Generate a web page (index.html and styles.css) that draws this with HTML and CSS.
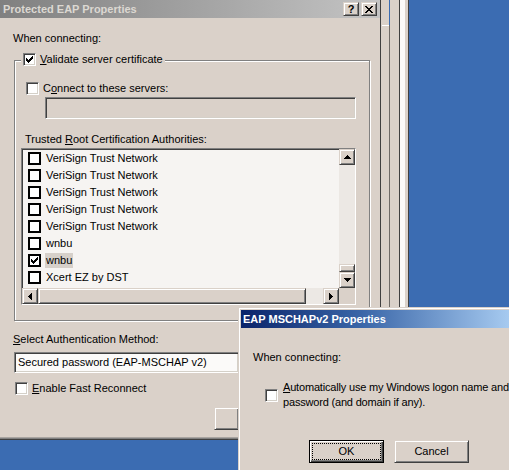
FILE: index.html
```html
<!DOCTYPE html>
<html>
<head>
<meta charset="utf-8">
<title>Protected EAP Properties</title>
<link rel="stylesheet" href="styles.css">
</head>
<body>
<div class="desktop">
  <div class="bgwin">
    <div class="sc sc-a"><div class="sc-a-top"></div></div>
    <div class="sl sl-g"></div>
    <div class="sc sc-b"></div>
    <div class="sl"></div>
    <div class="sw"></div>
    <div class="sc sc-c"></div>
    <div class="sl"></div>
  </div>

  <div class="win main">
    <div class="titlebar inactive">
      <span class="title">Protected EAP Properties</span>
      <span class="tbtns">
        <span class="tbtn raised">?</span>
        <span class="tbtn raised"><svg width="8" height="7" viewBox="0 0 8 7"><path d="M0 0h2v1H0z M6 0h2v1H6z M1 1h2v1H1z M5 1h2v1H5z M2 2h4v1H2z M3 3h2v1H3z M2 4h4v1H2z M1 5h2v1H1z M5 5h2v1H5z M0 6h2v1H0z M6 6h2v1H6z" fill="#000"/></svg></span>
      </span>
    </div>
    <div class="main-body">
      <div class="label when">When connecting:</div>
      <div class="group">
        <div class="legend">
          <span class="cb"><svg class="chk" width="7" height="7" viewBox="0 0 7 7"><path d="M0 2h1v3H0z M1 3h1v3H1z M2 4h1v3H2z M3 3h1v3H3z M4 2h1v3H4z M5 1h1v3H5z M6 0h1v3H6z" fill="#000"/></svg></span>
          <span><u>V</u>alidate server certificate</span>
        </div>
        <div class="row connect"><span class="cb"></span><span>C<u>o</u>nnect to these servers:</span></div>
        <div class="textbox sunken"></div>
        <div class="label trusted">Trusted <u>R</u>oot Certification Authorities:</div>
        <div class="listbox sunken">
          <div class="items">
            <div class="item"><span class="lcb"></span><span>VeriSign Trust Network</span></div>
            <div class="item"><span class="lcb"></span><span>VeriSign Trust Network</span></div>
            <div class="item"><span class="lcb"></span><span>VeriSign Trust Network</span></div>
            <div class="item"><span class="lcb"></span><span>VeriSign Trust Network</span></div>
            <div class="item"><span class="lcb"></span><span>VeriSign Trust Network</span></div>
            <div class="item"><span class="lcb"></span><span>wnbu</span></div>
            <div class="item"><span class="lcb"><svg class="chk" width="7" height="7" viewBox="0 0 7 7"><path d="M0 2h1v3H0z M1 3h1v3H1z M2 4h1v3H2z M3 3h1v3H3z M4 2h1v3H4z M5 1h1v3H5z M6 0h1v3H6z" fill="#000"/></svg></span><span class="sel">wnbu</span></div>
            <div class="item"><span class="lcb"></span><span>Xcert EZ by DST</span></div>
          </div>
          <div class="vscroll">
            <span class="sbtn raised"><svg width="7" height="4" viewBox="0 0 7 4"><path d="M3 0h1v1H3z M2 1h3v1H2z M1 2h5v1H1z M0 3h7v1H0z" fill="#000"/></svg></span>
            <span class="vtrack"><span class="vthumb raised"></span></span>
            <span class="sbtn raised"><svg width="7" height="4" viewBox="0 0 7 4"><path d="M0 0h7v1H0z M1 1h5v1H1z M2 2h3v1H2z M3 3h1v1H3z" fill="#000"/></svg></span>
          </div>
          <div class="hscroll">
            <span class="sbtn raised"><svg width="4" height="7" viewBox="0 0 4 7"><path d="M0 3h1v1H0z M1 2h1v3H1z M2 1h1v5H2z M3 0h1v7H3z" fill="#000"/></svg></span>
            <span class="hthumb raised"></span>
            <span class="htrack"></span>
            <span class="sbtn raised"><svg width="4" height="7" viewBox="0 0 4 7"><path d="M0 0h1v7H0z M1 1h1v5H1z M2 2h1v3H2z M3 3h1v1H3z" fill="#000"/></svg></span>
          </div>
          <div class="corner"></div>
        </div>
      </div>
      <div class="label select"><u>S</u>elect Authentication Method:</div>
      <div class="combo sunken">Secured password (EAP-MSCHAP v2)</div>
      <div class="row fast"><span class="cb"></span><span><u>E</u>nable Fast Reconnect</span></div>
      <div class="mainbtn raised"></div>
    </div>
  </div>

  <div class="win mschap">
    <div class="titlebar active">
      <span class="title">EAP MSCHAPv2 Properties</span>
    </div>
    <div class="ms-body">
      <div class="label">When connecting:</div>
      <div class="ms-row">
        <span class="cb"></span>
        <span class="ms-text"><u>A</u>utomatically use my Windows logon name and<br>password (and domain if any).</span>
      </div>
      <div class="ms-btns">
        <span class="btn default"><span class="focus">OK</span></span>
        <span class="btn raised">Cancel</span>
      </div>
    </div>
  </div>
</div>
</body>
</html>
```

FILE: styles.css
```css
* { box-sizing: border-box; }
html, body { margin: 0; padding: 0; }
body {
  width: 509px;
  height: 470px;
  overflow: hidden;
  background: #3b6cb2;
  font-family: "Liberation Sans", Arial, sans-serif;
  font-size: 11px;
  line-height: 13px;
  color: #000;
}
u { text-decoration: underline; text-underline-offset: 1px; }

.desktop { position: relative; width: 509px; height: 470px; overflow: hidden; }

/* background window edge strip */
.bgwin {
  position: absolute;
  left: 381px;
  top: 0;
  width: 28px;
  height: 470px;
  display: flex;
}
.sc { background: #dad1c9; height: 100%; }
.sc-a { width: 8px; padding-top: 25px; }
.sc-a-top { height: 1px; background: #fff; margin-left: 1px; }
.sc-b { width: 9px; }
.sc-c { width: 3px; }
.sl { width: 1px; height: 100%; background: #404040; }
.sl-g { margin-top: 25px; height: auto; background: #6e6a66; box-shadow: 1px 0 0 #fff; }
.sw { width: 5px; background: #fbfaf8; }

/* windows */
.win { position: absolute; background: #dad1c9; }
.main {
  left: 0;
  top: 0;
  width: 381px;
  height: 440px;
  border-right: 1px solid #404040;
  border-bottom: 1px solid #404040;
  box-shadow: inset 0 -1px 0 #808080, inset 0 -2px 0 #a8a4a0;
}

.titlebar {
  height: 18px;
  display: flex;
  align-items: center;
  justify-content: space-between;
  padding: 0 3px 0 3px;
  white-space: nowrap;
}
.titlebar.inactive {
  background: linear-gradient(to right, #808080 0%, #a8a8a8 60%, #c4c4c4 100%);
  color: #dcd8d2;
}
.titlebar.active {
  background: linear-gradient(to right, #0a246a 0%, #3a66a8 45%, #a6caf0 100%);
  color: #fff;
  padding-left: 2px;
}
.title { font-weight: bold; }
.tbtns { display: flex; gap: 2px; }
.tbtn {
  width: 16px;
  height: 14px;
  display: flex;
  align-items: center;
  justify-content: center;
  font-weight: bold;
  font-size: 11px;
  line-height: 11px;
  color: #000;
}

.raised {
  background: #dad1c9;
  border: 1px solid;
  border-color: #dad1c9 #404040 #404040 #dad1c9;
  box-shadow: inset 1px 1px 0 #fff, inset -1px -1px 0 #808080;
}
.sunken {
  border: 1px solid;
  border-color: #808080 #fff #fff #808080;
  box-shadow: inset 1px 1px 0 #404040, inset -1px -1px 0 #d4d0c8;
}

.main-body { padding: 14px 0 0 13px; }
.label { height: 13px; white-space: nowrap; }

.group {
  position: relative;
  margin: 15px 0 0 1px;
  width: 356px;
  height: 261px;
  border: 1px solid #808080;
  box-shadow: inset 1px 1px 0 #fff, 1px 1px 0 #fff;
}
.legend {
  position: absolute;
  top: -8px;
  left: 6px;
  padding: 0 2px;
  display: flex;
  align-items: center;
  gap: 4px;
  background: #dad1c9;
  height: 13px;
  white-space: nowrap;
}

.cb {
  width: 13px;
  height: 13px;
  flex: none;
  background: #fff;
  border: 1px solid;
  border-color: #808080 #fff #fff #808080;
  box-shadow: inset 1px 1px 0 #404040, inset -1px -1px 0 #d4d0c8;
  padding: 2px;
  display: block;
}
.chk { display: block; }

.row { display: flex; align-items: center; gap: 4px; height: 13px; white-space: nowrap; }
.connect { margin: 21px 0 0 11px; }
.textbox { margin: 2px 0 0 30px; width: 311px; height: 22px; background: #dad1c9; }
.trusted { margin: 14px 0 0 10px; }

.listbox {
  margin: 2px 0 0 6px;
  width: 335px;
  height: 157px;
  background: #f6f4f2;
  display: grid;
  grid-template-columns: 1fr 16px;
  grid-template-rows: 1fr 16px;
}
.items { padding-top: 1px; overflow: hidden; }
.item {
  height: 17px;
  display: flex;
  align-items: center;
  gap: 5px;
  padding-left: 6px;
  white-space: nowrap;
}
.lcb {
  width: 13px;
  height: 13px;
  flex: none;
  border: 2px solid #000;
  background: #fff;
  padding: 1px;
}
.sel { background: #d6d0ca; padding: 1px 1px; margin-left: -1px; }

.vscroll { display: flex; flex-direction: column; }
.hscroll { display: flex; }
.sbtn {
  width: 16px;
  height: 16px;
  flex: none;
  display: flex;
  align-items: center;
  justify-content: center;
}
.sbtn svg { display: block; }
.vtrack {
  flex: 1;
  display: flex;
  flex-direction: column;
  justify-content: flex-end;
  background: #ece8e4;
}
.vthumb { height: 8px; }
.hthumb { width: 268px; height: 16px; flex: none; }
.htrack { flex: 1; background: #ece8e4; }
.corner { background: #dad1c9; }

.select { margin-top: 12px; }
.combo {
  margin: 6px 0 0 1px;
  width: 224px;
  height: 21px;
  background: #fbfaf9;
  padding: 2px 0 0 3px;
  line-height: 15px;
  white-space: nowrap;
  border-right: 0;
}
.fast { margin: 9px 0 0 2px; }
.mainbtn { margin: 12px 0 0 201px; width: 24px; height: 23px; border-right: 0; }

/* MSCHAP dialog */
.mschap {
  left: 238px;
  top: 307px;
  width: 271px;
  height: 163px;
  border-top: 1px solid #dad1c9;
  border-left: 1px solid #dad1c9;
  box-shadow: inset 1px 1px 0 #fff;
  padding: 2px 0 0 2px;
}
.ms-body { padding: 23px 0 0 12px; }
.ms-row {
  margin: 16px 0 0 12px;
  display: flex;
  align-items: center;
  gap: 5px;
}
.ms-text { line-height: 15px; white-space: nowrap; letter-spacing: -0.18px; }
.ms-btns { margin: 30px 0 0 56px; display: flex; gap: 10px; }
.btn {
  width: 75px;
  height: 23px;
  display: flex;
  align-items: center;
  justify-content: center;
  line-height: 13px;
}
.btn.default {
  background: #dad1c9;
  border: 1px solid #000;
  box-shadow: inset 1px 1px 0 #fff, inset -1px -1px 0 #404040, inset -2px -2px 0 #808080;
  padding: 3px;
}
.focus {
  flex: 1;
  align-self: stretch;
  display: flex;
  align-items: center;
  justify-content: center;
  outline: 1px dotted #000;
  outline-offset: 0;
}
```
